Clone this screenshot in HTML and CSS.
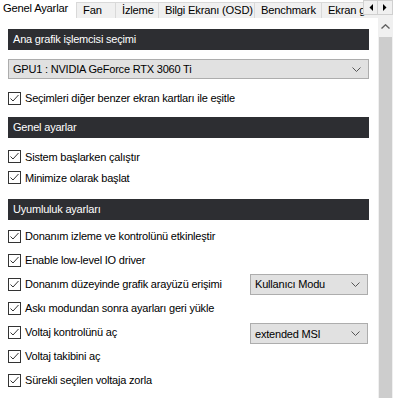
FILE: index.html
```html
<!DOCTYPE html>
<html lang="tr">
<head>
<meta charset="utf-8">
<link rel="stylesheet" href="styles.css">
</head>
<body>
<div class="window">
  <div class="tabbar">
    <div class="tabs">
      <div class="tab active">Genel Ayarlar</div>
      <div class="tab tab-fan">Fan</div>
      <div class="tab tab-mon">İzleme</div>
      <div class="tab tab-osd">Bilgi Ekranı (OSD)</div>
      <div class="tab tab-bench">Benchmark</div>
      <div class="tab tab-shot">Ekran görüntüsü</div>
    </div>
    <div class="tab-arrows">
      <div class="arrow-btn"><svg width="4" height="7" viewBox="0 0 4 7"><polygon points="4,0 4,7 0.5,3.5" fill="#000"/></svg></div>
      <div class="arrow-btn"><svg width="4" height="7" viewBox="0 0 4 7"><polygon points="0,0 0,7 3.5,3.5" fill="#000"/></svg></div>
    </div>
  </div>
  <div class="body">
    <div class="panel">
      <div class="section-head">Ana grafik işlemcisi seçimi</div>
      <div class="select select-wide">
        <span>GPU1 : NVIDIA GeForce RTX 3060 Ti</span>
        <svg class="chev" width="9" height="5" viewBox="0 0 9 5"><polyline points="0.5,0.5 4.5,4.5 8.5,0.5" fill="none" stroke="#555" stroke-width="1"/></svg>
      </div>
      <div class="row row-first">
        <span class="cb"><svg width="11" height="11" viewBox="0 0 11 11"><polyline points="1.5,5.5 4,8 9.5,2" fill="none" stroke="#333" stroke-width="1"/></svg></span>
        <span>Seçimleri diğer benzer ekran kartları ile eşitle</span>
      </div>

      <div class="section-head">Genel ayarlar</div>
      <div class="group-general">
        <div class="row row-mid">
          <span class="cb"><svg width="11" height="11" viewBox="0 0 11 11"><polyline points="1.5,5.5 4,8 9.5,2" fill="none" stroke="#333" stroke-width="1"/></svg></span>
          <span>Sistem başlarken çalıştır</span>
        </div>
        <div class="row row-mid">
          <span class="cb"><svg width="11" height="11" viewBox="0 0 11 11"><polyline points="1.5,5.5 4,8 9.5,2" fill="none" stroke="#333" stroke-width="1"/></svg></span>
          <span>Minimize olarak başlat</span>
        </div>
      </div>

      <div class="section-head head-compat">Uyumluluk ayarları</div>
      <div class="group-compat">
        <div class="row row-tall">
          <span class="cb"><svg width="11" height="11" viewBox="0 0 11 11"><polyline points="1.5,5.5 4,8 9.5,2" fill="none" stroke="#333" stroke-width="1"/></svg></span>
          <span>Donanım izleme ve kontrolünü etkinleştir</span>
        </div>
        <div class="row row-tall">
          <span class="cb"><svg width="11" height="11" viewBox="0 0 11 11"><polyline points="1.5,5.5 4,8 9.5,2" fill="none" stroke="#333" stroke-width="1"/></svg></span>
          <span>Enable low-level IO driver</span>
        </div>
        <div class="row row-tall">
          <span class="cb"><svg width="11" height="11" viewBox="0 0 11 11"><polyline points="1.5,5.5 4,8 9.5,2" fill="none" stroke="#333" stroke-width="1"/></svg></span>
          <span>Donanım düzeyinde grafik arayüzü erişimi</span>
          <div class="select select-side">
            <span>Kullanıcı Modu</span>
            <svg class="chev" width="9" height="5" viewBox="0 0 9 5"><polyline points="0.5,0.5 4.5,4.5 8.5,0.5" fill="none" stroke="#555" stroke-width="1"/></svg>
          </div>
        </div>
        <div class="row row-tall">
          <span class="cb"><svg width="11" height="11" viewBox="0 0 11 11"><polyline points="1.5,5.5 4,8 9.5,2" fill="none" stroke="#333" stroke-width="1"/></svg></span>
          <span>Askı modundan sonra ayarları geri yükle</span>
        </div>
        <div class="row row-tall">
          <span class="cb"><svg width="11" height="11" viewBox="0 0 11 11"><polyline points="1.5,5.5 4,8 9.5,2" fill="none" stroke="#333" stroke-width="1"/></svg></span>
          <span>Voltaj kontrolünü aç</span>
          <div class="select select-side select-low">
            <span>extended MSI</span>
            <svg class="chev" width="9" height="5" viewBox="0 0 9 5"><polyline points="0.5,0.5 4.5,4.5 8.5,0.5" fill="none" stroke="#555" stroke-width="1"/></svg>
          </div>
        </div>
        <div class="row row-tall">
          <span class="cb"><svg width="11" height="11" viewBox="0 0 11 11"><polyline points="1.5,5.5 4,8 9.5,2" fill="none" stroke="#333" stroke-width="1"/></svg></span>
          <span>Voltaj takibini aç</span>
        </div>
        <div class="row row-tall">
          <span class="cb"><svg width="11" height="11" viewBox="0 0 11 11"><polyline points="1.5,5.5 4,8 9.5,2" fill="none" stroke="#333" stroke-width="1"/></svg></span>
          <span>Sürekli seçilen voltaja zorla</span>
        </div>
      </div>
    </div>
    <div class="scrollbar">
      <div class="sb-up"><svg width="9" height="5" viewBox="0 0 9 5"><polyline points="0.5,4.5 4.5,0.8 8.5,4.5" fill="none" stroke="#606060" stroke-width="1.4"/></svg></div>
      <div class="sb-thumb"></div>
    </div>
  </div>
</div>
</body>
</html>
```

FILE: styles.css
```css
* { box-sizing: border-box; }
html, body { margin: 0; padding: 0; background: #fff; }
body {
  font-family: "Liberation Sans", Arial, sans-serif;
  font-size: 11px;
  letter-spacing: -0.2px;
  color: #000;
}
.window {
  width: 393px;
  height: 398px;
  overflow: hidden;
  display: flex;
  flex-direction: column;
  background: #fff;
}
.tabbar {
  height: 18px;
  display: flex;
  flex: none;
  position: relative;
  font-size: 11.2px;
}
.tabs {
  flex: 1;
  display: flex;
  overflow: hidden;
  white-space: nowrap;
}
.tab {
  flex: none;
  height: 18px;
  margin-top: 2px;
  padding: 0 0 0 6px;
  line-height: 15px;
  background: #f0f0f0;
  border: 1px solid #d9d9d9;
  border-bottom: none;
  border-left: none;
  overflow: hidden;
}
.tab.active {
  margin-top: 0;
  padding: 0 0 0 3px;
  line-height: 16px;
  background: #fff;
  border: none;
  margin-right: 2px;
  width: 74px;
}
.tab-fan { width: 40px; border-left: 1px solid #d9d9d9; }
.tab-mon { width: 43px; }
.tab-osd { width: 96px; }
.tab-bench { width: 67px; }
.tab-shot { width: 80px; }
.tab-arrows {
  position: absolute;
  right: 0;
  top: 0;
  display: flex;
}
.arrow-btn {
  width: 15px;
  height: 15px;
  background: #f0f0f0;
  border: 1px solid #d0d0d0;
  display: flex;
  align-items: center;
  justify-content: center;
}
.arrow-btn + .arrow-btn { border-left: none; }
.body {
  flex: 1;
  display: flex;
  min-height: 0;
}
.panel {
  width: 378px;
  padding: 11px 9px 0 8px;
  white-space: nowrap;
}
.section-head {
  height: 21px;
  line-height: 21px;
  padding-left: 5px;
  background: #2d2e32;
  color: #fff;
}
.select {
  height: 20px;
  background: #e1e1e1;
  border: 1px solid #adadad;
  display: flex;
  align-items: center;
  justify-content: space-between;
  padding: 0 7px 0 4px;
}
.select-wide { margin-top: 9px; }
.select-side {
  flex: none;
  width: 118px;
  height: 21px;
  margin-left: auto;
  margin-right: 1px;
  padding-left: 4px;
}
.select-low { margin-top: 3px; }
.chev { flex: none; }
.row {
  display: flex;
  align-items: center;
  gap: 4px;
}
.row-first { height: 20px; margin: 9px 0 9px; }
.group-general { margin-top: 8px; }
.row-mid { height: 21px; }
.head-compat { margin-top: 11px; }
.group-compat { margin-top: 4px; }
.row-tall { height: 24px; }
.cb {
  flex: none;
  width: 13px;
  height: 13px;
  border: 1px solid #333;
  background: #fff;
  display: flex;
  align-items: center;
  justify-content: center;
}
.cb svg { display: block; }
.scrollbar {
  width: 15px;
  flex: none;
  background: #f0f0f0;
  display: flex;
  flex-direction: column;
}
.sb-up {
  height: 17px;
  display: flex;
  align-items: center;
  justify-content: center;
}
.sb-thumb {
  flex: 1;
  margin: 2px 1px 0 1px;
  background: #cdcdcd;
}
```
